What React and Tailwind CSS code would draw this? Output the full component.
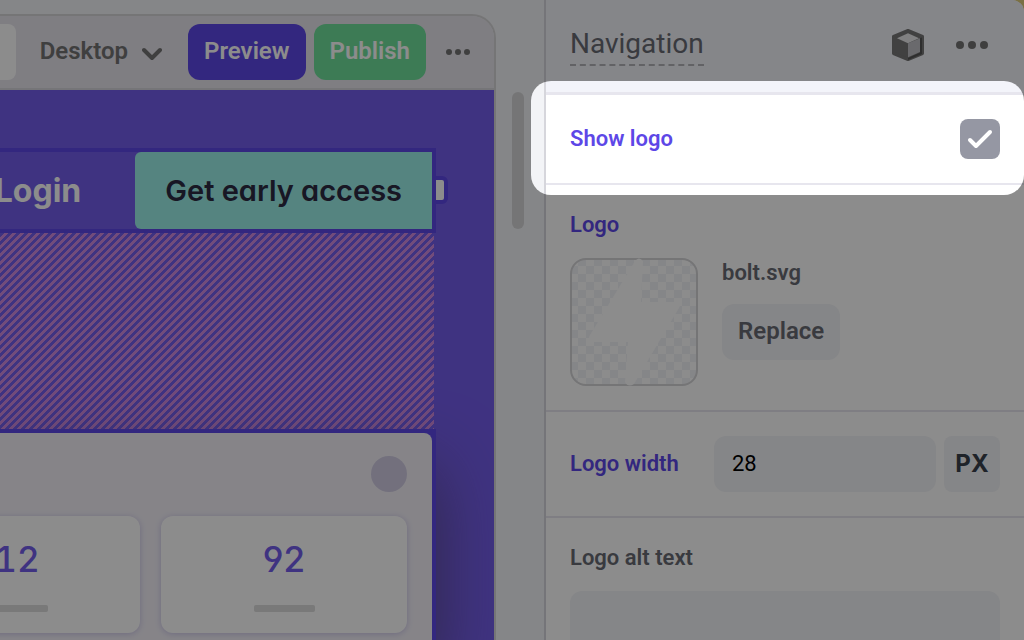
function Dots({ size }) {
  return (
    <svg width={size} height="8" viewBox="0 0 32 8" className="shrink-0" fill="#747474" aria-hidden="true">
      <circle cx="4" cy="4" r="4" />
      <circle cx="16" cy="4" r="4" />
      <circle cx="28" cy="4" r="4" />
    </svg>
  );
}

function Toolbar() {
  return (
    <header className="flex items-center justify-end border-b-2 border-[#d6d5da] bg-[#e7e5ed] pt-2 pr-6 pb-2 text-2xl font-semibold">
      <span className="mr-6 h-14 flex-1 rounded-r-lg bg-white" />
      <button type="button" className="mr-[26px] flex items-center gap-[14px] pb-0.5 text-[#747474]">
        Desktop
        <svg width="20" height="14" viewBox="0 0 20 14" className="mt-1.5" fill="none" stroke="#747474" strokeWidth="4" strokeLinecap="round" strokeLinejoin="round" aria-hidden="true">
          <path d="M2 3l8 8 8-8" />
        </svg>
      </button>
      <button type="button" className="mr-2 h-14 rounded-xl bg-[#5d47e7] px-4 pb-0.5 text-white">Preview</button>
      <button type="button" className="mr-5 h-14 rounded-xl bg-[#6fe19b] px-4 pb-0.5 text-white">Publish</button>
      <button type="button" aria-label="More actions">
        <Dots size="24" />
      </button>
    </header>
  );
}

function Stat({ value, tabular }) {
  const figures = tabular ? "[font-feature-settings:'tnum']" : "[font-feature-settings:'cv04']";
  return (
    <div className="flex h-[117px] w-[246px] shrink-0 flex-col items-center rounded-xl bg-white pt-5 shadow-[0_1px_6px_#c9c4e8]">
      <span className={`text-[35px] leading-[46px] font-medium text-[#745dec] ${figures}`}>{value}</span>
      <span className="mt-[23px] h-[7px] w-[61px] rounded-xs bg-[#dcdcdc]" />
    </div>
  );
}

function Canvas() {
  return (
    <div className="flex flex-1 flex-col bg-[#745dec] pt-[58px] font-[Inter,sans-serif]">
      <nav className="mr-[58px] flex items-stretch justify-end border-y-4 border-r-4 border-[#5d47e7]">
        <a href="#login" className="mr-[54px] shrink-0 self-center text-[32px] font-bold text-white">Login</a>
        <button type="button" className="relative h-[77px] shrink-0 rounded-l-md bg-[#9cf0e9] px-[30px] text-[29px] font-semibold whitespace-nowrap text-[#2c2a42] [font-feature-settings:'cv11']">
          Get early access
          <span className="absolute top-6 -right-4 h-7 w-4 rounded-r-md border-4 border-[#5d47e7] bg-white" />
        </button>
      </nav>
      <div className="mr-[60px] h-[196px] bg-[linear-gradient(135deg,#745dec_25%,#d08ae0_25%,#d08ae0_50%,#745dec_50%,#745dec_75%,#d08ae0_75%)] bg-size-[8px_8px]" />
      <section className="mr-[58px] flex flex-1 flex-col bg-[#5d47e7] pt-1 pr-1 shadow-[0_40px_70px_rgba(84,70,120,0.9)]">
        <div className="flex flex-1 flex-col items-end rounded-tr-lg bg-[#f4f1f8] pt-[23px] pr-[25px]">
          <span className="h-9 w-9 rounded-full bg-[#d1cce4]" />
          <div className="mt-6 flex justify-end gap-[21px]">
            <Stat value="12" tabular />
            <Stat value="92" />
          </div>
        </div>
      </section>
    </div>
  );
}

function CubeIcon() {
  return (
    <svg width="32" height="32" viewBox="0 0 32 32" aria-hidden="true">
      <path d="M16 1.500L30.500 7.500V24.500L16 30.500L1.500 24.500V7.500Z" fill="#777" stroke="#777" strokeWidth="3" strokeLinejoin="round" />
      <path d="M28 9V23.500L16 29V31L30 25V8.500Z" fill="#555" />
      <path d="M5 9.300L16 4.300L27 9.300L16 14.300Z" fill="#e9eaec" />
      <path d="M16 14.300L28 9.300V23L16 28.300Z" fill="#c1c1c6" />
    </svg>
  );
}

function Inspector() {
  return (
    <aside className="flex min-h-screen flex-col rounded-tr-xl border-l-2 border-[#d6d6dc] bg-white text-[22px] font-semibold text-[#686b73]">
      <header className="flex h-[95px] shrink-0 items-start justify-between rounded-tr-xl border-b-3 border-[#e7e6ee] bg-[#f3f4fa] pr-9 pl-6">
        <h2 className="mt-6 h-[42px] border-b-2 border-dashed border-[#b2b3b8] text-[28px] leading-10 font-normal">Navigation</h2>
        <div className="mt-[29px] flex items-center gap-8">
          <button type="button" aria-label="Component"><CubeIcon /></button>
          <button type="button" aria-label="More options"><Dots size="32" /></button>
        </div>
      </header>

      <label className="relative flex h-[90px] shrink-0 items-center justify-between border-b-2 border-[#e7e6ee] px-6 text-[#5d47e7]">
        <span className="pb-0.5">Show logo</span>
        <span className="grid">
          <input type="checkbox" defaultChecked className="col-start-1 row-start-1 h-10 w-10 appearance-none rounded-lg bg-[#9597a3]" />
          <svg width="40" height="40" viewBox="0 0 40 40" className="pointer-events-none col-start-1 row-start-1" fill="none" stroke="white" strokeWidth="4" strokeLinecap="round" strokeLinejoin="round" aria-hidden="true">
            <path d="M10 21l6 6L30 13" />
          </svg>
        </span>
        <span className="pointer-events-none absolute -top-[14px] right-0 -bottom-3 -left-[15px] z-50 rounded-[20px] shadow-[0_0_0_2000px_rgba(0,0,0,0.45)]" />
      </label>

      <section className="shrink-0 border-b-2 border-[#e7e6ee] px-6 pt-6 pb-6">
        <h3 className="leading-8 text-[#5d47e7]">Logo</h3>
        <div className="mt-[17px] flex gap-6">
          <svg width="128" height="128" viewBox="0 0 128 128" role="img" aria-label="Logo preview">
            <defs>
              <pattern id="checks" width="16" height="16" patternUnits="userSpaceOnUse">
                <path d="M8 0h8v8H8zM0 8h8v8H0z" fill="#f3f4f8" />
              </pattern>
            </defs>
            <rect x="1" y="1" width="126" height="126" rx="15" fill="url(#checks)" stroke="#d5d5d8" strokeWidth="2" />
            <path d="M65 3Q69 -2 73 3L71 44H107Q112 45 109 50L64 126Q58 130 55 124L58 84H22Q17 82 20 77Z" fill="white" />
          </svg>
          <div className="flex flex-col items-start">
            <span className="leading-[30px]">bolt.svg</span>
            <button type="button" className="mt-4 h-14 rounded-xl bg-[#f3f4f7] px-4 pb-0.5 text-2xl">Replace</button>
          </div>
        </div>
      </section>

      <section className="flex shrink-0 items-center gap-2 border-b-2 border-[#e7e6ee] px-6 py-6">
        <label htmlFor="logo-width" className="w-[136px] pb-0.5 text-[#5d47e7]">Logo width</label>
        <input id="logo-width" type="text" defaultValue="28" className="h-14 min-w-0 flex-1 rounded-xl bg-[#f3f4f7] px-[18px] pb-0.5 font-normal text-black" />
        <button type="button" className="h-14 w-14 rounded-lg bg-[#f3f4f7] font-[Inter,sans-serif] text-2xl font-bold text-[#3a414b]">PX</button>
      </section>

      <section className="flex flex-1 flex-col px-6 pt-6">
        <label htmlFor="logo-alt" className="leading-8">Logo alt text</label>
        <textarea id="logo-alt" className="mt-[17px] min-h-20 w-full flex-1 resize-none rounded-xl bg-[#f3f4f7] p-4" />
      </section>
    </aside>
  );
}

export default function App() {
  return (
    <main className="flex h-screen overflow-hidden bg-[#f3f4f7] font-[Roboto,sans-serif]">
      <div className="mt-[14px] flex min-w-0 flex-1 flex-col overflow-hidden rounded-tr-3xl border-t-2 border-r-2 border-[#d6d6d8]">
        <Toolbar />
        <Canvas />
      </div>
      <div className="w-12 shrink-0 px-4 pt-[92px]">
        <div className="h-[137px] w-3 rounded-full bg-[#d6d6d8]" />
      </div>
      <div className="w-[480px] shrink-0 bg-[#dfcc7d]">
        <Inspector />
      </div>
    </main>
  );
}
